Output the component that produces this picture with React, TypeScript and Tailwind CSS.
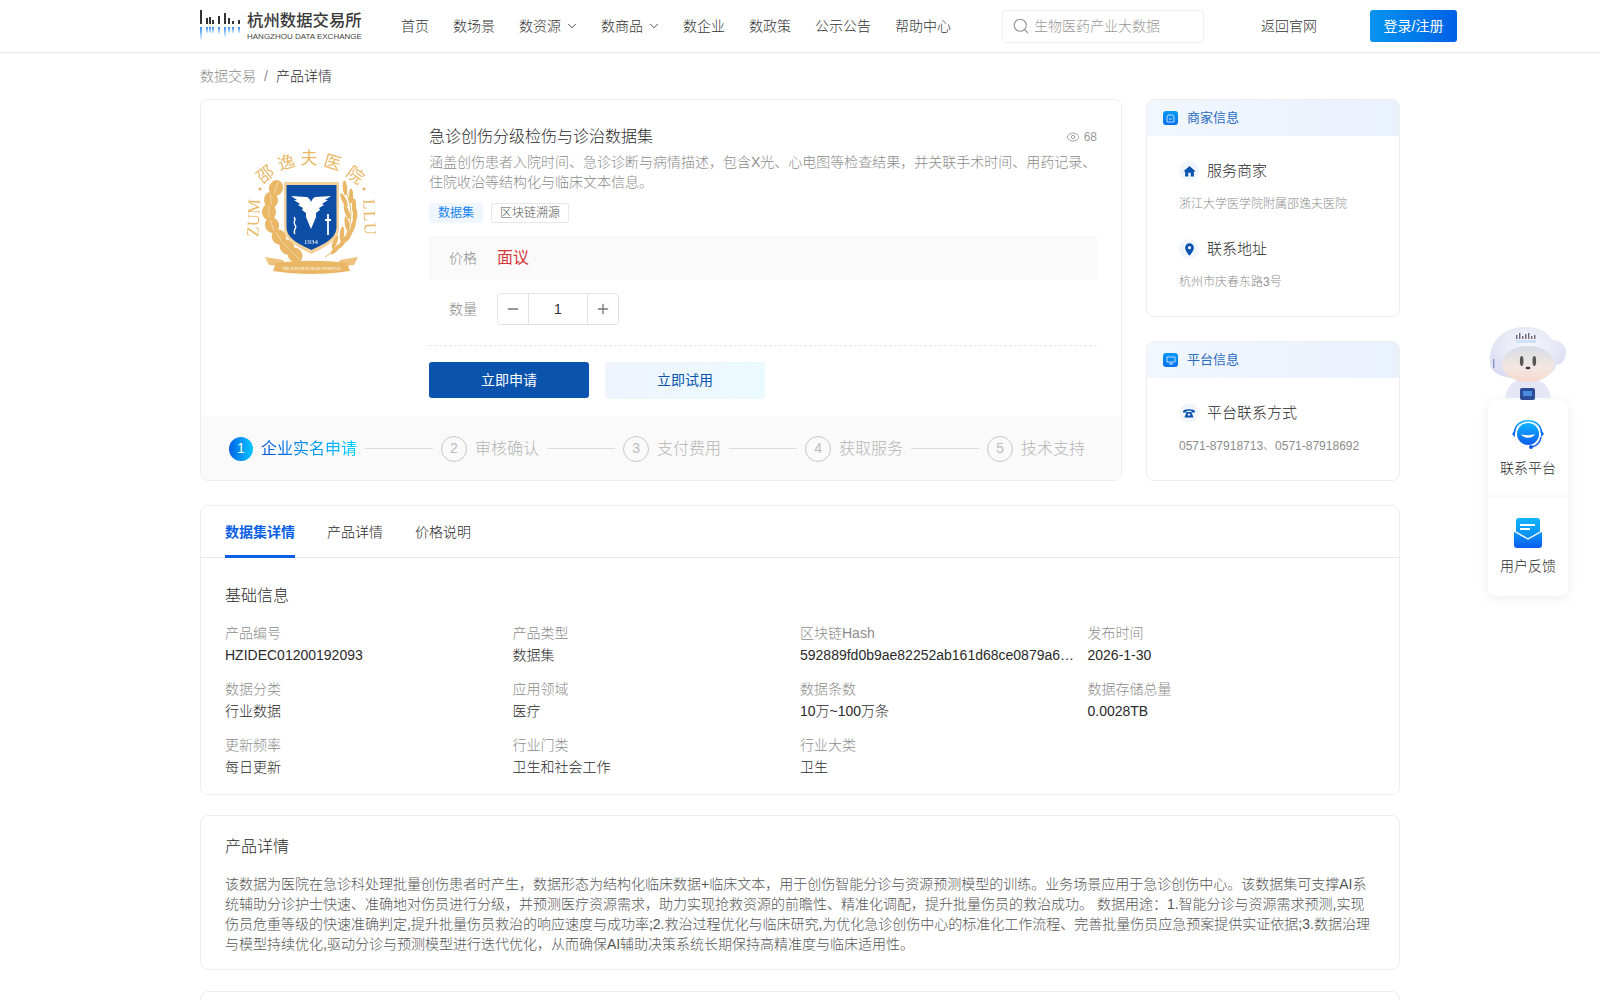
import { ChevronDown, Eye, Minus, Plus, Search } from 'lucide-react';
import { MdHome, MdLocationOn } from 'react-icons/md';

const navItems = [
  { label: '首页' },
  { label: '数场景' },
  { label: '数资源', caret: true },
  { label: '数商品', caret: true },
  { label: '数企业' },
  { label: '数政策' },
  { label: '公示公告' },
  { label: '帮助中心' },
];

const steps = ['企业实名申请', '审核确认', '支付费用', '获取服务', '技术支持'];

const baseInfo = [
  ['产品编号', 'HZIDEC01200192093'],
  ['产品类型', '数据集'],
  ['区块链Hash', '592889fd0b9ae82252ab161d68ce0879a6…'],
  ['发布时间', '2026-1-30'],
  ['数据分类', '行业数据'],
  ['应用领域', '医疗'],
  ['数据条数', '10万~100万条'],
  ['数据存储总量', '0.0028TB'],
  ['更新频率', '每日更新'],
  ['行业门类', '卫生和社会工作'],
  ['行业大类', '卫生'],
];

function Logo() {
  const bars = [[1, 14], [7, 6], [10, 7], [13, 4], [19, 8], [25, 11], [29, 6], [33, 3], [39, 4]];
  return (
    <div className="flex w-[162px] shrink-0 items-center">
      <svg width="42" height="32" viewBox="0 0 42 32" className="shrink-0">
        <defs>
          <linearGradient id="logoFade" x1="0" y1="0" x2="0" y2="1">
            <stop offset="0" stopColor="#2f8df5" />
            <stop offset="1" stopColor="#2f8df5" stopOpacity="0" />
          </linearGradient>
        </defs>
        {bars.map(([x, h]) => (
          <rect key={x} x={x - 1} y={14 - h} width="2" height={h} fill="#333" />
        ))}
        {bars.map(([x, h]) => (
          <rect key={`b${x}`} x={x - 1} y={17} width="2" height={Math.max(h, 7)} fill="url(#logoFade)" />
        ))}
      </svg>
      <div className="ml-[5px] flex flex-col">
        <span className="text-[16.4px] leading-[19px] font-medium whitespace-nowrap text-[#3a3a3a]">杭州数据交易所</span>
        <span className="mt-[1px] text-[8px] leading-[11px] whitespace-nowrap text-[#444]">HANGZHOU DATA EXCHANGE</span>
      </div>
    </div>
  );
}

function Crest() {
  const gold = '#e9b766';
  const title = [
    ['邵', 24, 29, -38], ['逸', 43, 18, -18], ['夫', 64, 14, 0], ['医', 86, 18, 16], ['院', 107, 30, 36],
  ] as const;
  const leaves = [
    [31, 38, 20], [26, 50, -5], [24, 62, 0], [27, 75, -20], [34, 87, -30], [42, 97, -40], [50, 105, -45],
  ];
  const wheat = [
    [100, 38, -5], [106, 46, 0], [109, 56, 0], [110, 66, 5], [108, 76, 15], [104, 85, 25], [98, 92, 35], [91, 99, 45],
    [99, 50, -25], [102, 62, -20], [102, 74, -10], [97, 84, 5], [90, 92, 20],
  ];
  return (
    <svg width="133" height="125" viewBox="0 0 133 125" className="mt-[50px] ml-[44px] overflow-visible blur-[0.3px]">
      {title.map(([ch, x, y, r]) => (
        <text key={ch} x={x} y={y} fontSize="17" fontWeight="400" textAnchor="middle" fill={gold} transform={`rotate(${r} ${x} ${y})`}>{ch}</text>
      ))}
      <text fontSize="17" fill={gold} textAnchor="middle" fontFamily="'Liberation Serif', serif" transform="rotate(-88 14 68)" x="14" y="68">ZUM</text>
      <text fontSize="17" fill={gold} textAnchor="middle" letterSpacing="1.5" fontFamily="'Liberation Serif', serif" transform="rotate(88 119 68)" x="119" y="68">LLU</text>
      <circle cx="15" cy="39" r="1.6" fill={gold} />
      <circle cx="119" cy="39" r="1.6" fill={gold} />
      {leaves.map(([x, y, r], i) => (
        <g key={i} transform={`rotate(${r} ${x} ${y})`}>
          <ellipse cx={x} cy={y} rx="7" ry="8" fill={gold} />
          <path d={`M${x} ${y - 6} V${y + 6}`} stroke="#f7e3bf" strokeWidth="0.7" />
        </g>
      ))}
      <path d="M80 107 C100 95 116 70 98 35" stroke={gold} strokeWidth="1" fill="none" />
      {wheat.map(([x, y, r], i) => (
        <ellipse key={i} cx={x} cy={y} rx="2.2" ry="7.5" fill={gold} transform={`rotate(${r} ${x} ${y})`} />
      ))}
      <path d="M39 32 H94 V78 C94 91 78 98 66.5 104 C55 98 39 91 39 78 Z" fill="#f4d19b" />
      <path d="M41.5 35 H91.5 V77 C91.5 89 77 95 66.5 100 C56 95 41.5 89 41.5 77 Z" fill="#0c4ea6" />
      <path d="M46 46 L61 47 C63 47 65 49 66 52 C67 49 69 47 71 47 L86 46 L80 50 L83 50 L77 54 L79 55 L74 58 L75 60 L71 63 L71 67 L66 79 L61 67 L61 63 L57 60 L58 58 L53 55 L55 54 L49 50 L52 50 Z" fill="#fff" />
      <path d="M49 67 C52 70 47 72 50 75 C53 78 47 80 50 84" stroke="#fff" strokeWidth="1.4" fill="none" />
      <path d="M83 64 V85 M80 70 H86" stroke="#fff" strokeWidth="1.8" fill="none" />
      <text x="66" y="94" textAnchor="middle" fontSize="7" fill="#fff" fontFamily="'Liberation Serif', serif">1934</text>
      <path d="M20 107 L38 110 L42 117 L24 115 Z" fill="#eec27d" />
      <path d="M113 107 L95 110 L91 117 L109 115 Z" fill="#eec27d" />
      <path d="M31 113 C55 110 78 110 102 113 L105 121 C80 125 53 125 28 121 Z" fill={gold} />
      <text x="66.5" y="120" textAnchor="middle" fontSize="4" fill="#fff" fontFamily="'Liberation Serif', serif">THE RUN RUN SHAW HOSPITAL</text>
    </svg>
  );
}

function HeadIcon({ kind }: { kind: 'shop' | 'screen' }) {
  return (
    <span className="flex h-[14px] w-[15px] items-center justify-center rounded-[3px] bg-linear-to-b from-[#0a9af5] to-[#0a6ff0]">
      {kind === 'shop' ? (
        <svg width="9" height="9" viewBox="0 0 9 9" fill="none" stroke="#cfe6ff" strokeWidth="0.9">
          <path d="M1 3 L2 1 H7 L8 3 V8 H1 Z M3 5 H6" />
        </svg>
      ) : (
        <svg width="10" height="9" viewBox="0 0 10 9" fill="none" stroke="#cfe6ff" strokeWidth="0.9">
          <path d="M1 1 H9 V6 H1 Z M5 6 V8 M3 8 H7" />
        </svg>
      )}
    </span>
  );
}

function RoundIcon({ children }: { children: React.ReactNode }) {
  return (
    <span className="flex h-[20px] w-[20px] shrink-0 items-center justify-center rounded-full bg-[#f1f6fd] text-[#0a54ae]">
      {children}
    </span>
  );
}

function PhoneIcon() {
  return (
    <svg width="12" height="10" viewBox="0 0 12 10" fill="#0a54ae">
      <path d="M0 3.6 C0 0.6 12 0.6 12 3.6 V4.6 H8.6 V3.2 C7.4 2.7 4.6 2.7 3.4 3.2 V4.6 H0 Z" />
      <path d="M3.6 4 H8.4 L10.6 9.6 H1.4 Z" />
      <circle cx="6" cy="6.6" r="1.2" fill="#f1f6fd" />
    </svg>
  );
}

function SideCard({ title, kind, children, className }: { title: string; kind: 'shop' | 'screen'; children: React.ReactNode; className: string }) {
  return (
    <div className={`overflow-hidden rounded-lg border border-[#eeeeee] ${className}`}>
      <div className="flex h-[36px] items-center gap-[9px] bg-linear-to-r from-[#f1f7fe] to-[#e9f1fd] pl-[16px]">
        <HeadIcon kind={kind} />
        <span className="text-[13px] font-normal text-[#2b6bc0]">{title}</span>
      </div>
      {children}
    </div>
  );
}

function InfoRow({ icon, title, text }: { icon: React.ReactNode; title: string; text: string }) {
  return (
    <div>
      <div className="flex h-[24px] items-center gap-[8px]">
        <RoundIcon>{icon}</RoundIcon>
        <span className="text-[15px] text-[#2a2a2a]">{title}</span>
      </div>
      <p className="mt-[11px] text-[12px] leading-[20px] text-[#8c8c8c]">{text}</p>
    </div>
  );
}

function Robot() {
  const bars = [[28, 4], [31, 6], [34, 3], [37, 5], [40, 6], [43, 3], [46, 4]];
  return (
    <svg width="80" height="75" viewBox="0 0 80 75" className="block blur-[0.5px]">
      <defs>
        <radialGradient id="robotHelmet" cx="0.5" cy="0.35" r="0.75">
          <stop offset="0" stopColor="#f7f7fb" />
          <stop offset="1" stopColor="#d5d9f0" />
        </radialGradient>
        <linearGradient id="robotFace" x1="0" y1="0" x2="0" y2="1">
          <stop offset="0" stopColor="#d6dce6" />
          <stop offset="0.6" stopColor="#f4e6e2" />
          <stop offset="1" stopColor="#f6d8cc" />
        </linearGradient>
      </defs>
      <path d="M17 73 C19 60 26 54 40 54 C54 54 61 60 63 73 Z" fill="#e4e6f6" />
      <rect x="32" y="63" width="15" height="12" rx="2" fill="#2c4c96" />
      <rect x="35" y="66" width="9" height="5" fill="#4a8ce0" />
      <path d="M2 38 C0 15 18 1 38 2 C52 2 60 8 64 15 C72 15 78 20 78 27 C78 37 72 40 68 40 C66 50 54 54 38 54 C18 54 3 50 2 38 Z" fill="url(#robotHelmet)" />
      <ellipse cx="40" cy="39" rx="26" ry="18" fill="url(#robotFace)" />
      <ellipse cx="33.7" cy="36" rx="1.8" ry="5" fill="#555" />
      <ellipse cx="46.3" cy="36" rx="1.8" ry="5" fill="#555" />
      <ellipse cx="40" cy="43" rx="2.4" ry="1.3" fill="#333" />
      <rect x="5" y="34" width="1.4" height="9" fill="#8d94c8" />
      {bars.map(([x, h]) => (
        <rect key={x} x={x} y={14 - h} width="1.4" height={h} fill="#667" />
      ))}
      <rect x="28" y="15" width="20" height="3" fill="#cfe0fa" />
    </svg>
  );
}

function HeadsetIcon() {
  return (
    <svg width="34" height="30" viewBox="0 0 34 30">
      <defs>
        <linearGradient id="headsetGrad" x1="0" y1="0" x2="0" y2="1">
          <stop offset="0" stopColor="#12b4ff" />
          <stop offset="1" stopColor="#0a5cf0" />
        </linearGradient>
      </defs>
      <path d="M3.5 13 C3.5 5 10 0.8 17 0.8 C24 0.8 30.5 5 30.5 13" stroke="url(#headsetGrad)" strokeWidth="1.6" fill="none" />
      <circle cx="17" cy="14" r="11" fill="url(#headsetGrad)" />
      <path d="M10 14 C12 19 22 19 24 14 C21 15.5 13 15.5 10 14 Z" fill="#fff" />
      <path d="M1 14 L4 10 V17 Z M33 14 L30 10 V17 Z" fill="#0a6cf0" />
      <path d="M30 17 C29 24 25 26 21 27" stroke="#0a5cf0" strokeWidth="1.5" fill="none" />
      <circle cx="20" cy="27" r="2" fill="#0a5cf0" />
    </svg>
  );
}

function MailIcon() {
  return (
    <svg width="28" height="30" viewBox="0 0 28 30">
      <defs>
        <linearGradient id="mailTop" x1="0" y1="0" x2="0" y2="1">
          <stop offset="0" stopColor="#12b4ff" />
          <stop offset="1" stopColor="#0a8cf5" />
        </linearGradient>
        <linearGradient id="mailBottom" x1="0" y1="0" x2="0" y2="1">
          <stop offset="0" stopColor="#0a9cf5" />
          <stop offset="1" stopColor="#0a5cf0" />
        </linearGradient>
      </defs>
      <rect x="2" y="0" width="24" height="20" rx="3" fill="url(#mailTop)" />
      <rect x="6" y="6" width="15" height="2" fill="#fff" />
      <rect x="6" y="10" width="10" height="2" fill="#fff" />
      <path d="M0 13 L14 21 L28 13 V27 C28 29 27 30 25 30 H3 C1 30 0 29 0 27 Z" fill="url(#mailBottom)" />
      <path d="M0 13 L14 21 L28 13" stroke="#fff" strokeWidth="1.4" fill="none" />
    </svg>
  );
}

export default function App() {
  return (
    <div className="relative h-[1000px] overflow-hidden bg-white font-['Liberation_Sans','Noto_Sans_CJK_SC',sans-serif] text-[14px] font-light text-[#2a2a2a]">
      {/* Header */}
      <header className="h-[53px] border-b border-[#e6e6e6]">
        <div className="mx-auto flex h-[52px] w-[1200px] items-center">
          <Logo />
          <nav className="ml-[39px] flex shrink-0 items-center gap-[24px]">
            {navItems.map((item) => (
              <span key={item.label} className="flex items-center gap-[4px] whitespace-nowrap text-[#333]">
                {item.label}
                {item.caret && <ChevronDown size={14} strokeWidth={1.5} className="-mr-[2px]" />}
              </span>
            ))}
          </nav>
          <div className="ml-[51px] flex h-[33px] w-[202px] shrink-0 items-center gap-[4px] rounded-[4px] border border-[#f0f0f0] pl-[9px]">
            <Search size={18} strokeWidth={1.5} className="text-[#999]" />
            <span className="text-[#999]">生物医药产业大数据</span>
          </div>
          <span className="ml-[57px] shrink-0 whitespace-nowrap text-[#333]">返回官网</span>
          <button className="ml-[53px] h-[32px] w-[87px] shrink-0 rounded-[3px] bg-linear-to-r from-[#0a94ee] to-[#0060e6] font-normal text-white">登录/注册</button>
        </div>
      </header>

      <main className="mx-auto w-[1200px]">
        {/* Breadcrumb */}
        <div className="flex h-[46px] items-center gap-[8px]">
          <span className="text-[#8c8c8c]">数据交易</span>
          <span className="text-[#8c8c8c]">/</span>
          <span>产品详情</span>
        </div>

        <div className="flex gap-[24px]">
          {/* Product card */}
          <section className="h-[382px] w-[922px] overflow-hidden rounded-lg border border-[#eeeeee]">
            <div className="flex h-[316px]">
              <div className="w-[228px] shrink-0">
                <Crest />
              </div>
              <div className="w-[668px] pt-[26px]">
                <div className="flex h-[21px] items-center justify-between">
                  <h1 className="text-[16px] text-[#2a2a2a]">急诊创伤分级检伤与诊治数据集</h1>
                  <span className="flex items-center gap-[4px] text-[12px] text-[#999]">
                    <Eye size={14} strokeWidth={1.5} />
                    68
                  </span>
                </div>
                <p className="mt-[5px] leading-[20px] text-[#8c8c8c]">
                  涵盖创伤患者入院时间、急诊诊断与病情描述，包含X光、心电图等检查结果，并关联手术时间、用药记录、住院收治等结构化与临床文本信息。
                </p>
                <div className="mt-[11px] flex gap-[8px] text-[12px]">
                  <span className="flex h-[20px] items-center rounded-[2px] bg-[#eff6fe] px-[9px] font-normal text-[#1a84f0]">数据集</span>
                  <span className="flex h-[20px] items-center rounded-[2px] border border-[#e8e8e8] px-[8px] text-[#555]">区块链溯源</span>
                </div>
                <div className="mt-[13px] flex h-[44px] items-center rounded-[2px] bg-[#fafafa] pl-[20px]">
                  <span className="w-[48px] text-[#8c8c8c]">价格</span>
                  <span className="text-[16px] font-normal text-[#d4373c]">面议</span>
                </div>
                <div className="mt-[13px] flex h-[32px] items-center pl-[20px]">
                  <span className="w-[48px] text-[#8c8c8c]">数量</span>
                  <div className="flex h-[32px] w-[122px] items-center rounded-[4px] border border-[#e3e3e3] text-[#333]">
                    <span className="flex h-full w-[31px] items-center justify-center border-r border-[#e3e3e3] text-[#777]">
                      <Minus size={16} strokeWidth={2} />
                    </span>
                    <span className="flex-1 text-center">1</span>
                    <span className="flex h-full w-[31px] items-center justify-center border-l border-[#e3e3e3] text-[#777]">
                      <Plus size={16} strokeWidth={2} />
                    </span>
                  </div>
                </div>
                <div className="mt-[20px] border-t border-dashed border-[#e8e8e8]" />
                <div className="mt-[16px] flex gap-[16px]">
                  <button className="h-[36px] w-[160px] rounded-[3px] bg-[#0a54ae] font-normal text-white">立即申请</button>
                  <button className="h-[37px] w-[160px] rounded-[3px] bg-linear-to-r from-[#eff4fd] to-[#ebfaff] font-normal text-[#0a54ae]">立即试用</button>
                </div>
              </div>
            </div>
            <div className="flex h-[65px] items-center bg-[#fafafa] pl-[28px] text-[16px] text-[#b5b5b5]">
              {steps.map((step, i) => (
                <div key={step} className="flex items-center gap-[8px]">
                  {i === 0 ? (
                    <span className="flex h-[24px] w-[24px] items-center justify-center rounded-full bg-linear-to-r from-[#0a5fe6] to-[#00c8ff] text-[14px] text-white">1</span>
                  ) : (
                    <span className="flex h-[26px] w-[26px] items-center justify-center rounded-full border border-[#c8c8c8] text-[14px] text-[#bbb]">{i + 1}</span>
                  )}
                  {i === 0 ? (
                    <span className="bg-linear-to-r from-[#0a50dc] to-[#00d0ff] bg-clip-text font-normal text-transparent">{step}</span>
                  ) : (
                    <span>{step}</span>
                  )}
                  {i < steps.length - 1 && <span className="mr-[8px] h-px w-[68px] bg-[#dddddd]" />}
                </div>
              ))}
            </div>
          </section>

          {/* Side cards */}
          <aside className="flex w-[254px] flex-col gap-[24px]">
            <SideCard title="商家信息" kind="shop" className="h-[218px]">
              <div className="flex flex-col gap-[23px] pt-[23px] pl-[32px]">
                <InfoRow icon={<MdHome size={15} />} title="服务商家" text="浙江大学医学院附属邵逸夫医院" />
                <InfoRow icon={<MdLocationOn size={15} />} title="联系地址" text="杭州市庆春东路3号" />
              </div>
            </SideCard>
            <SideCard title="平台信息" kind="screen" className="h-[140px]">
              <div className="pt-[23px] pl-[32px]">
                <InfoRow icon={<PhoneIcon />} title="平台联系方式" text="0571-87918713、0571-87918692" />
              </div>
            </SideCard>
          </aside>
        </div>

        {/* Tabs + base info */}
        <section className="mt-[24px] h-[290px] rounded-lg border border-[#eeeeee]">
          <div className="flex h-[52px] gap-[32px] border-b border-[#e8e8e8] px-[24px]">
            <span className="-mb-px flex h-[52px] items-center border-b-[3px] border-[#0a5fe6] pt-[3px] font-bold text-[#0a5fe6]">数据集详情</span>
            <span className="flex items-center pt-[2px]">产品详情</span>
            <span className="flex items-center pt-[2px]">价格说明</span>
          </div>
          <div className="px-[24px]">
            <h2 className="pt-[27px] text-[16px] leading-[22px]">基础信息</h2>
            <div className="mt-[16px] grid grid-cols-4 gap-y-[13px]">
              {baseInfo.map(([label, value]) => (
                <div key={label} className="min-w-0 pr-[8px] leading-[21px]">
                  <div className="text-[#8c8c8c]">{label}</div>
                  <div className="mt-[1px] whitespace-nowrap">{value}</div>
                </div>
              ))}
            </div>
          </div>
        </section>

        {/* Product detail */}
        <section className="mt-[20px] h-[155px] rounded-lg border border-[#eeeeee] px-[24px]">
          <h2 className="pt-[20px] text-[16px] leading-[22px]">产品详情</h2>
          <p className="mt-[16px] leading-[20px] text-[#555]">
            该数据为医院在急诊科处理批量创伤患者时产生，数据形态为结构化临床数据+临床文本，用于创伤智能分诊与资源预测模型的训练。业务场景应用于急诊创伤中心。该数据集可支撑AI系统辅助分诊护士快速、准确地对伤员进行分级，并预测医疗资源需求，助力实现抢救资源的前瞻性、精准化调配，提升批量伤员的救治成功。 数据用途：1.智能分诊与资源需求预测,实现伤员危重等级的快速准确判定,提升批量伤员救治的响应速度与成功率;2.救治过程优化与临床研究,为优化急诊创伤中心的标准化工作流程、完善批量伤员应急预案提供实证依据;3.数据治理与模型持续优化,驱动分诊与预测模型进行迭代优化，从而确保AI辅助决策系统长期保持高精准度与临床适用性。
          </p>
        </section>

        <section className="mt-[21px] h-[40px] rounded-lg border border-[#eeeeee]" />
      </main>

      {/* Floating service panel */}
      <div className="absolute top-[325px] right-[32px] w-[80px]">
        <Robot />
        <div className="rounded-lg bg-white shadow-[0_2px_14px_rgba(0,0,0,0.07)]">
          <div className="flex h-[95px] flex-col items-center pt-[20px]">
            <HeadsetIcon />
            <span className="mt-[8px] leading-[20px]">联系平台</span>
          </div>
          <div className="flex h-[101px] flex-col items-center border-t-[3px] border-[#fbfbfb] pt-[20px]">
            <MailIcon />
            <span className="mt-[8px] leading-[20px]">用户反馈</span>
          </div>
        </div>
      </div>
    </div>
  );
}
